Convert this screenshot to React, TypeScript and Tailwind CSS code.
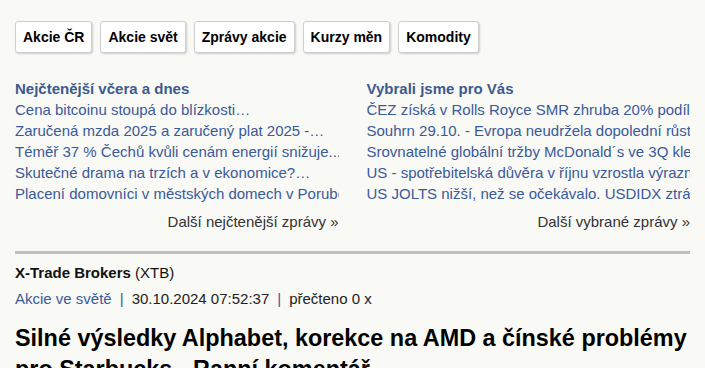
import React from "react";

const tabs = ["Akcie ČR", "Akcie svět", "Zprávy akcie", "Kurzy měn", "Komodity"];

const mostRead = [
  "Cena bitcoinu stoupá do blízkosti…",
  "Zaručená mzda 2025 a zaručený plat 2025 -…",
  "Téměř 37 % Čechů kvůli cenám energií snižuje...",
  "Skutečné drama na trzích a v ekonomice?…",
  "Placení domovníci v městských domech v Porubě",
];

const picked = [
  "ČEZ získá v Rolls Royce SMR zhruba 20% podíl",
  "Souhrn 29.10. - Evropa neudržela dopolední růst",
  "Srovnatelné globální tržby McDonald´s ve 3Q klesly",
  "US - spotřebitelská důvěra v říjnu vzrostla výrazně",
  "US JOLTS nižší, než se očekávalo. USDIDX ztrácí",
];

function NewsBox({ title, items, more }: { title: string; items: string[]; more: string }) {
  return (
    <div className="min-w-0">
      <h3 className="text-[15px] leading-[21px] font-bold text-[#3d5b8e]">{title}</h3>
      <ul>
        {items.map((t) => (
          <li key={t} className="text-[15px] leading-[21px] text-[#3a5a9b] whitespace-nowrap overflow-hidden">
            {t}
          </li>
        ))}
      </ul>
      <p className="mt-[7px] text-right text-[15px] leading-[21px] text-[#333]">{more}</p>
    </div>
  );
}

export default function App() {
  return (
    <main className="min-h-screen bg-[#f9f9f5] px-[15px] pt-[21px] font-['Liberation_Sans',Arial,sans-serif] text-[#111]">
      <div className="w-[675px]">
        <nav className="flex gap-[8px]">
          {tabs.map((t) => (
            <button
              key={t}
              className="h-[32px] px-[7px] bg-white border border-[#cfcfcf] rounded-[3px] shadow-[1px_1px_2px_rgba(0,0,0,0.18)] text-[14px] font-bold text-black"
            >
              {t}
            </button>
          ))}
        </nav>

        <div className="grid grid-cols-2 gap-[28px] mt-[25px]">
          <NewsBox title="Nejčtenější včera a dnes" items={mostRead} more="Další nejčtenější zprávy »" />
          <NewsBox title="Vybrali jsme pro Vás" items={picked} more="Další vybrané zprávy »" />
        </div>

        <div className="mt-[19px] h-[3px] bg-[#c0c0c0]" />

        <p className="mt-[8px] text-[15px] leading-[21px]">
          <span className="font-bold">X-Trade Brokers</span> (XTB)
        </p>
        <p className="mt-[5px] text-[15px] leading-[21px] text-[#222]">
          <span className="text-[#3a5a9b]">Akcie ve světě</span>
          <span className="text-[#3a5a9b] mx-[8px]">|</span>
          30.10.2024 07:52:37
          <span className="text-[#3a5a9b] mx-[8px]">|</span>
          přečteno 0 x
        </p>

        <h1 className="mt-[14px] text-[23.4px] leading-[31px] font-bold text-black">
          Silné výsledky Alphabet, korekce na AMD a čínské problémy pro Starbucks - Ranní komentář
        </h1>
      </div>
    </main>
  );
}
